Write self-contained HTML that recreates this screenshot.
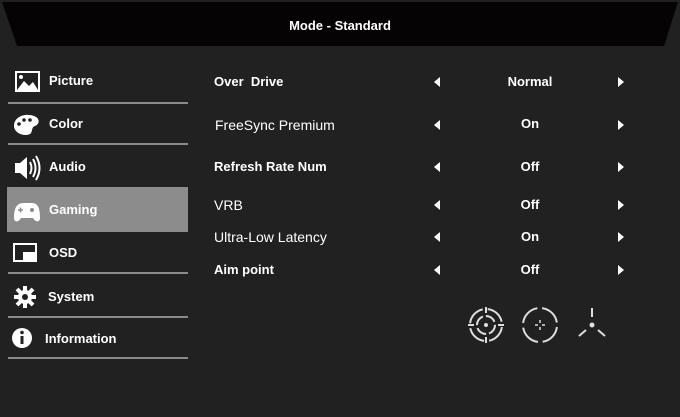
<!DOCTYPE html>
<html><head><style>
body{margin:0;width:680px;height:417px;background:#212121;overflow:hidden;font-family:"Liberation Sans",sans-serif;color:#fff;position:relative}
.t{position:absolute;font-size:13px;font-weight:bold;white-space:nowrap}
.n{font-weight:normal;font-size:14px}
.sep{position:absolute;left:8px;width:180px;height:2px;background:#8a8a8a}
.al,.ar{position:absolute;width:0;height:0;border-top:5px solid transparent;border-bottom:5px solid transparent}
.al{left:434px;border-right:6px solid #fff}
.ar{left:618px;border-left:6px solid #fff}
.v{position:absolute;left:480px;width:100px;text-align:center;font-size:13px;font-weight:bold}
</style></head><body>
<svg style="position:absolute;left:0;top:0" width="680" height="50"><polygon points="2,2 678,2 664,46 17,46" fill="#060304"/></svg>
<div class="t" style="left:0;width:680px;text-align:center;top:18px;font-size:13px">Mode - Standard</div>

<div style="position:absolute;left:7px;top:187px;width:181px;height:45px;background:#8c8c8c"></div>
<div class="sep" style="top:102px"></div>
<div class="sep" style="top:143px"></div>
<div class="sep" style="top:272px"></div>
<div class="sep" style="top:316px"></div>
<div class="sep" style="top:357px"></div>

<svg style="position:absolute;left:0;top:60px" width="50" height="300" fill="#fff">
<rect x="16" y="12" width="23" height="19" fill="none" stroke="#fff" stroke-width="2"/>
<circle cx="21" cy="17" r="2"/><polygon points="17,30 24,21 29,26 33,22 38,30"/>
<path d="M14,66 C14,56 26,53 34,56 C40,58 40,64 35,66 C31,67 33,72 30,74 C24,77 14,73 14,66Z"/>
<circle cx="19" cy="64" r="1.8" fill="#212121"/><circle cx="24" cy="60" r="1.8" fill="#212121"/><circle cx="30" cy="60" r="1.8" fill="#212121"/>
<path d="M15,103 h5 l7,-6 v22 l-7,-6 h-5z"/>
<path d="M30,102 q3,6 0,12 M33,99 q5,9 0,18 M36,96 q7,12 0,24" stroke="#fff" stroke-width="2" fill="none"/>
<path d="M14,158 C14,146 18,143 24,143 H31 C37,143 40,146 40,158 C40,162 36,163 33,158 H21 C18,163 14,162 14,158Z"/>
<path d="M18,150 h5 M20.5,147.5 v5" stroke="#8c8c8c" stroke-width="1.5"/><circle cx="32" cy="150" r="2" fill="#8c8c8c"/>
<rect x="14" y="184" width="22" height="17" fill="none" stroke="#fff" stroke-width="2"/><rect x="23" y="192" width="12" height="8"/>
<circle cx="25" cy="237" r="7"/><path d="M25,226v22M14,237h22M17,229l16,16M33,229l-16,16" stroke="#fff" stroke-width="4"/><circle cx="25" cy="237" r="3" fill="#212121"/>
<circle cx="22" cy="278" r="10"/><rect x="20.5" y="276" width="3" height="8" fill="#212121"/><circle cx="22" cy="272.5" r="1.8" fill="#212121"/>
</svg>
<div class="t" style="left:49px;top:73px">Picture</div>
<div class="t" style="left:49px;top:116px">Color</div>
<div class="t" style="left:49px;top:159px">Audio</div>
<div class="t" style="left:49px;top:202px">Gaming</div>
<div class="t" style="left:49px;top:245px">OSD</div>
<div class="t" style="left:48px;top:289px">System</div>
<div class="t" style="left:45px;top:331px">Information</div>

<div class="t" style="left:214px;top:74px">Over&nbsp; Drive</div>
<div class="t n" style="left:215px;top:117px">FreeSync Premium</div>
<div class="t" style="left:214px;top:159px">Refresh Rate Num</div>
<div class="t n" style="left:214px;top:197px">VRB</div>
<div class="t n" style="left:214px;top:229px">Ultra-Low Latency</div>
<div class="t" style="left:214px;top:262px">Aim point</div>

<div class="v" style="top:74px">Normal</div>
<div class="v n" style="top:116px;font-weight:bold">On</div>
<div class="v" style="top:159px">Off</div>
<div class="v" style="top:197px">Off</div>
<div class="v n" style="top:229px">On</div>
<div class="v" style="top:262px">Off</div>

<div class="al" style="top:77px"></div><div class="ar" style="top:77px"></div>
<div class="al" style="top:120px"></div><div class="ar" style="top:120px"></div>
<div class="al" style="top:162px"></div><div class="ar" style="top:162px"></div>
<div class="al" style="top:200px"></div><div class="ar" style="top:200px"></div>
<div class="al" style="top:232px"></div><div class="ar" style="top:232px"></div>
<div class="al" style="top:265px"></div><div class="ar" style="top:265px"></div>

<svg style="position:absolute;left:450px;top:290px" width="180" height="70" fill="none" stroke="#ddd" stroke-width="2">
<circle cx="36" cy="35" r="16" stroke-dasharray="20 5" stroke-dashoffset="-2"/>
<circle cx="36" cy="35" r="9" stroke-dasharray="11 3"/>
<circle cx="36" cy="35" r="2" fill="#ddd" stroke="none"/>
<path d="M18,35h6M48,35h6M36,17v6M36,47v6"/>
<circle cx="90" cy="35" r="17" stroke-dasharray="22 4.7" stroke-dashoffset="-2"/>
<path d="M90,30v3M90,37v3M85,35h3M92,35h3" stroke-width="1.5"/>
<path d="M142,18v9M136,40l-7,6M148,40l7,6"/>
<circle cx="142" cy="35" r="2.5" fill="#ddd" stroke="none"/>
</svg>
</body></html>
